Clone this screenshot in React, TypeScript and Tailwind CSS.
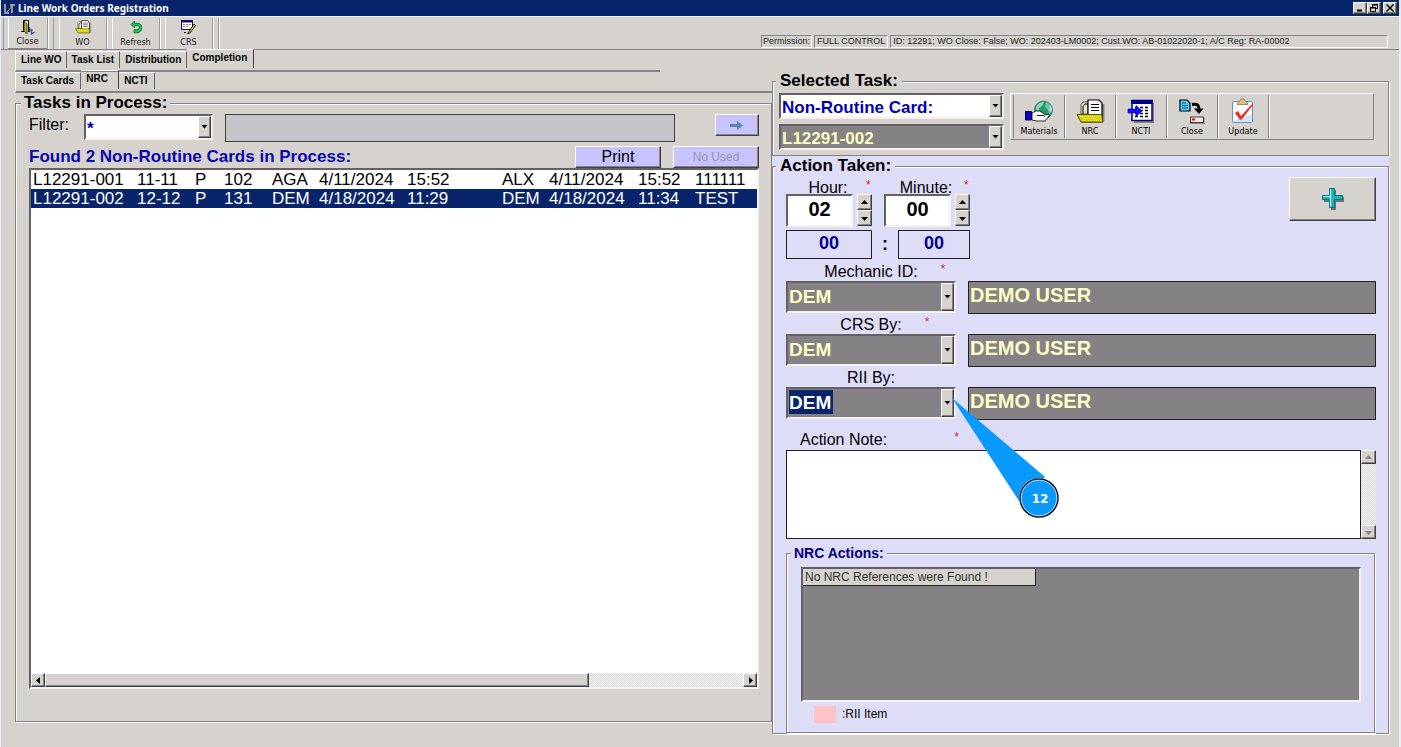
import type { ReactNode } from 'react';

const raised =
  'border border-t-white border-l-white border-r-[#424142] border-b-[#424142] shadow-[inset_-1px_-1px_0_#848284]';
const etched =
  'border border-[#848284] shadow-[1px_1px_0_#ffffff,inset_1px_1px_0_#ffffff]';
const sunken =
  'border-2 border-t-[#636163] border-l-[#636163] border-r-[#f4f2ee] border-b-[#f4f2ee]';

type ArrowDir = 'up' | 'down' | 'left' | 'right';
const arrowPoints: Record<ArrowDir, string> = {
  up: '0,5 7,5 3.5,1',
  down: '0,2 7,2 3.5,6',
  left: '5,0 5,7 1,3.5',
  right: '2,0 2,7 6,3.5',
};

function Arrow({ dir, color = '#000' }: { dir: ArrowDir; color?: string }) {
  return (
    <svg width="7" height="7" viewBox="0 0 7 7" aria-hidden="true">
      <polygon points={arrowPoints[dir]} fill={color} />
    </svg>
  );
}

function Combo({ label, id, value, className, tone }: { label?: string; id: string; value: string; className: string; tone: string }) {
  return (
    <div className={`relative ${className}`}>
      <select
        id={id}
        aria-label={label}
        defaultValue={value}
        className={`h-full w-full appearance-none rounded-none pl-[1px] font-bold outline-none ${sunken} ${tone}`}
      >
        <option>{value}</option>
      </select>
      <span className={`pointer-events-none absolute inset-y-[2px] right-[2px] flex w-[13px] items-center justify-center bg-[#d6d3ce] ${raised}`}>
        <svg width="7" height="4" viewBox="0 0 7 4" aria-hidden="true">
          <polygon points="0.5,0 6.5,0 3.5,3.5" fill="#000" />
        </svg>
      </span>
    </div>
  );
}

function DoorIcon() {
  return (
    <svg width="14" height="16" viewBox="0 0 14 16" aria-hidden="true">
      <path d="M2.500 12V1.500h5V12" fill="#fff" stroke="#000" />
      <path d="M3 2l3 3v10l-3-3z" fill="#c6b800" stroke="#000" strokeWidth=".7" />
      <path d="M0 12.500h3M7 12.500h2" stroke="#000" />
      <path d="M8.500 8v3h3M10.500 11v4l3-2" fill="none" stroke="#2a4fb0" strokeWidth="1.300" />
    </svg>
  );
}

function FolderIcon({ width, height }: { width: number; height: number }) {
  return (
    <svg width={width} height={height} viewBox="0 0 29 25" aria-hidden="true">
      <path d="M26 5h2.500v17l-2 2H5v-2h20z" fill="#848284" />
      <path d="M5 15V5l2-2h5v12z" fill="#e7e7c6" stroke="#5a5a42" />
      <path d="M7 15V7l2-2h3" fill="none" stroke="#000" />
      <path d="M12 1h11l3 3v16H12z" fill="#fff" stroke="#000" strokeWidth="1.200" />
      <path d="M15 5.500h8M15 8.500h8M15 11.500h8" stroke="#000" />
      <path d="M1 15.500h24.500L27 23H5z" fill="#d6d000" stroke="#5a5700" />
      <path d="M4 17.500h21M5 19.500h20M6 21.500h20" stroke="#fff56a" strokeDasharray="1 1" />
    </svg>
  );
}

function RefreshIcon() {
  return (
    <svg width="12" height="13" viewBox="0 0 12 13" aria-hidden="true">
      <path d="M4.500 0L1 3.500 4.500 7V4.800h3c3 0 2.500 4-1 4H4v3h4c5-1 5-9 0-9.500H4.500z" fill="#22c553" stroke="#0b6b2b" strokeWidth=".9" />
    </svg>
  );
}

function CrsIcon() {
  return (
    <svg width="15" height="15" viewBox="0 0 15 15" aria-hidden="true">
      <rect x=".5" y=".5" width="11" height="9" fill="#fff" stroke="#10106b" />
      <path d="M0 1.500h12" stroke="#10106b" strokeWidth="2" />
      <path d="M2 4.500h8M2 6.500h6" stroke="#848284" strokeDasharray="2 1" />
      <path d="M13 4l1.500 1.500-5 7-2 1 .5-2z" fill="#d6c400" stroke="#000" strokeWidth=".8" />
      <path d="M3 12.500h2M6 13.500h2" stroke="#000" />
    </svg>
  );
}

function GlobeIcon() {
  return (
    <svg width="28" height="24" viewBox="0 0 28 24" aria-hidden="true">
      <circle cx="18.500" cy="11" r="9" fill="#1f9c6b" stroke="#4a6b7b" strokeWidth=".8" />
      <path d="M11 9c1-4 4-6 8-6l-2 4-3 2v5l-2 1z" fill="#8cd6bd" />
      <path d="M21 3c4 1 6 5 6 8l-3 5-1-5-3-3z" fill="#6bc69c" />
      <path d="M25 6l2 4-1 4-2-3z" fill="#b5d6f7" />
      <path d="M7 14l4-2h4l4 3 2 1 3-1v2l-4 5h-8l-5-1z" fill="#fff" stroke="#000" strokeWidth=".8" />
      <path d="M12 16.500h6l2 1" stroke="#000" strokeWidth=".9" fill="none" />
      <path d="M.5 12.500h6v8.500h-6z" fill="#0808bd" stroke="#000063" />
    </svg>
  );
}

function TableIcon() {
  return (
    <svg width="28" height="24" viewBox="0 0 28 24" aria-hidden="true">
      <path d="M7 4h20v20H7z" fill="#848284" />
      <rect x="5" y="1.500" width="20" height="20" fill="#fff" stroke="#000084" strokeWidth="1.500" />
      <path d="M4 3h22" stroke="#000084" strokeWidth="4" />
      <path d="M8 8.500h15M8 11.500h15M8 14.500h15M8 17.500h15" stroke="#000" strokeWidth="1.400" strokeDasharray="3 2" />
      <path d="M1 10h8V6.500l6 5.500-6 5.500V14H1z" fill="#1010f7" stroke="#0000a5" strokeWidth=".6" />
    </svg>
  );
}

function TransferIcon() {
  return (
    <svg width="26" height="25" viewBox="0 0 26 25" aria-hidden="true">
      <path d="M1 1h7l3 3v8H1z" fill="#5acfff" stroke="#000" strokeWidth="1.200" />
      <path d="M3 4h4M3 6.500h6M3 9h6" stroke="#08427b" strokeWidth="1.200" />
      <path d="M13 5.500c6-1 7 1 7 5" fill="none" stroke="#000" strokeWidth="3" />
      <path d="M15 9.500h9.500L20 15z" fill="#000" />
      <rect x="11.500" y="18" width="13" height="5.500" fill="#e7e7e7" stroke="#424142" />
      <path d="M11 24.500h15v-6" stroke="#848284" fill="none" />
      <path d="M13 20.500h3" stroke="#f00" strokeWidth="2" />
    </svg>
  );
}

function ClipboardIcon() {
  return (
    <svg width="24" height="26" viewBox="0 0 24 26" aria-hidden="true">
      <rect x="1.500" y="3.500" width="20" height="21" rx="1.500" fill="#f7fbff" stroke="#6b8cc6" />
      <path d="M4 22l17-6v8H4z" fill="#d6e3f7" />
      <path d="M6 6.500c0-3 3-2 4-5.500h3c1 3.500 4 2.500 4 5.500z" fill="#d6c68c" stroke="#8c7b42" strokeWidth=".8" />
      <path d="M4 15l3-2 3 5L21 6l1 1-11 14-2 1z" fill="#e73121" />
    </svg>
  );
}

function PlusIcon() {
  return (
    <svg width="24" height="24" viewBox="0 0 24 24" aria-hidden="true">
      <path d="M10 3h5v7h8v5h-8v8h-5v-8H3v-5h7z" fill="#736f73" />
      <path d="M8.500 1.500h5v7h8v4h-8v8h-5v-8h-7v-4h7z" fill="#18b5bd" stroke="#087078" />
      <path d="M9.500 20v-10.500M2 9.500h7.500v-7" stroke="#b5ffff" strokeWidth="1.200" fill="none" />
    </svg>
  );
}

function TopTool({ label, icon, className = 'w-[48px]' }: { label: string; icon: ReactNode; className?: string }) {
  return (
    <button type="button" className={`flex h-[31px] flex-col items-center justify-end border-r border-[#9c9a9c] pb-[1px] shadow-[1px_0_0_#fff,inset_1px_0_0_#fff] ${className}`}>
      <span className="flex flex-1 items-center">{icon}</span>
      <span className="text-[9px] leading-[11px] text-[#222]">{label}</span>
    </button>
  );
}

function TaskTool({ label, icon }: { label: string; icon: ReactNode }) {
  return (
    <button type="button" className="flex h-[43px] w-[51px] flex-col items-center border-r border-[#848284] pt-[2px] shadow-[1px_0_0_#fff]">
      <span className="flex h-[28px] items-center">{icon}</span>
      <span className="text-[9px] leading-[12px]">{label}</span>
    </button>
  );
}

function Tab({ label, active = false, className = '' }: { label: string; active?: boolean; className?: string }) {
  return (
    <button
      type="button"
      role="tab"
      aria-selected={active}
      className={`border-t border-t-white border-r pl-[5px] text-left text-[10px] font-bold leading-[14px] ${
        active ? 'h-[19px] border-r-[#424142] pb-[2px]' : 'h-[17px] border-r-[#636163]'
      } ${className}`}
    >
      {label}
    </button>
  );
}

function Star() {
  return <span className="pt-[2px] text-[12px] leading-[12px] text-[#e0202c]">*</span>;
}

function FieldLabel({ htmlFor, children, required = false, className }: { htmlFor: string; children: ReactNode; required?: boolean; className: string }) {
  return (
    <div className={`grid grid-cols-[1fr_auto_1fr] ${className}`}>
      <span />
      <label htmlFor={htmlFor} className="whitespace-nowrap text-[16px] leading-[21px]">
        {children}
      </label>
      <span className="flex pl-[23px]">{required && <Star />}</span>
    </div>
  );
}

function TimeField({ id, label, value }: { id: string; label: string; value: string }) {
  return (
    <div className="w-[86px]">
      <div className="grid h-[17px] grid-cols-[80px_6px]">
        <label htmlFor={id} className="pl-[4px] text-center text-[16px] leading-[21px]">{label}</label>
        <Star />
      </div>
      <div className="flex gap-[4px]">
        <input id={id} defaultValue={value} className={`h-[33px] w-[67px] bg-white pb-[3px] text-center text-[20px] font-bold outline-none ${sunken}`} />
        <div className="flex flex-col">
          <button type="button" aria-label={`${label} up`} className={`flex h-[16px] w-[15px] items-center justify-center bg-[#d6d3ce] ${raised}`}>
            <Arrow dir="up" />
          </button>
          <button type="button" aria-label={`${label} down`} className={`flex h-[16px] w-[15px] items-center justify-center bg-[#d6d3ce] ${raised}`}>
            <Arrow dir="down" />
          </button>
        </div>
      </div>
    </div>
  );
}

function Callout() {
  return (
    <svg className="pointer-events-none absolute top-[10px] left-[165px] z-10" width="112" height="124" viewBox="0 0 112 124">
      <polygon points="1,1 68,104 94,80" fill="#0a99ff" />
      <circle cx="88" cy="101" r="20" fill="#fff" />
      <circle cx="88" cy="101" r="19" fill="#0a99ff" stroke="#111" strokeWidth="1.500" />
      <circle cx="88" cy="101" r="17.800" fill="none" stroke="#d6ecff" strokeWidth=".8" />
      <text x="89" y="106" textAnchor="middle" className="fill-white font-['DejaVu_Sans'] text-[12px] font-bold">
        12
      </text>
    </svg>
  );
}

const signers = [
  { id: 'mechanic', label: 'Mechanic ID:', required: true, selected: false },
  { id: 'crs', label: 'CRS By:', required: true, selected: false },
  { id: 'rii', label: 'RII By:', required: false, selected: true },
];

const rows = [
  ['L12291-001', '11-11', 'P', '102', 'AGA', '4/11/2024', '15:52', 'ALX', '4/11/2024', '15:52', '111111'],
  ['L12291-002', '12-12', 'P', '131', 'DEM', '4/18/2024', '11:29', 'DEM', '4/18/2024', '11:34', 'TEST'],
];
const columnWidths = ['w-[106px]', 'w-[58px]', 'w-[29px]', 'w-[48px]', 'w-[47px]', 'w-[88px]', 'w-[95px]', 'w-[47px]', 'w-[89px]', 'w-[57px]', 'w-auto'];

const hatch = 'bg-[repeating-conic-gradient(#ffffff_0_25%,#d6d3ce_0_50%)] bg-size-[2px_2px]';

export default function App() {
  return (
    <div className="flex min-h-screen flex-col border-r-2 border-l border-[#e7ebf7] bg-[#d6d3ce] font-['Liberation_Sans',Arial,sans-serif] text-black">
      <header className="flex h-[16px] items-center justify-between bg-[#08246b] pl-[2px] pr-[2px]">
        <div className="flex items-center gap-[2px]">
          <svg width="13" height="13" viewBox="0 0 13 13" aria-hidden="true">
            <path d="M2 2v9h4M7 3h5M9 3v8" stroke="#b5bdd6" strokeWidth="1.500" fill="none" />
            <path d="M4 10l6-7" stroke="#d6a542" />
          </svg>
          <h1 className="font-['Noto_Sans'] text-[10px] font-bold leading-[14px] text-white">Line Work Orders Registration</h1>
        </div>
        <div className="flex">
          <button type="button" aria-label="Minimize" className={`flex h-[12px] w-[14px] items-center justify-center bg-[#d6d3ce] ${raised}`}>
            <svg width="8" height="8" viewBox="0 0 8 8"><path d="M1 6.500h5" stroke="#000" strokeWidth="2" /></svg>
          </button>
          <button type="button" aria-label="Restore" className={`flex h-[12px] w-[14px] items-center justify-center bg-[#d6d3ce] ${raised}`}>
            <svg width="8" height="8" viewBox="0 0 8 8"><path d="M2.500 3V.5h5v4H6M.5 3.500h5v4h-5zM2 1h6M0 4h6" fill="none" stroke="#000" /></svg>
          </button>
          <button type="button" aria-label="Close window" className={`ml-[2px] flex h-[12px] w-[14px] items-center justify-center bg-[#d6d3ce] ${raised}`}>
            <svg width="8" height="8" viewBox="0 0 8 8"><path d="M.5 .5l7 7M7.500 .5l-7 7" stroke="#000" strokeWidth="1.500" /></svg>
          </button>
        </div>
      </header>

      <div className="flex h-[34px] items-center justify-between border-b border-[#848284] border-t border-t-[#f4f2ee] pr-[11px]">
        <nav className="ml-[2px] flex h-[31px] gap-[5px] border-l border-[#9c9a9c] pl-[4px] font-['DejaVu_Sans_Condensed']">
          <TopTool label="Close" icon={<DoorIcon />} className="w-[40px] border-b border-b-[#848284]" />
          <span className="w-px bg-[#9c9a9c]" />
          <TopTool label="WO" icon={<FolderIcon width={16} height={14} />} />
          <TopTool label="Refresh" icon={<RefreshIcon />} />
          <TopTool label="CRS" icon={<CrsIcon />} />
          <span className="w-px bg-[#9c9a9c] shadow-[1px_0_0_#fff]" />
        </nav>
        <div className="flex w-[627px] gap-[2px] self-end pb-[1px] text-[9px] leading-[11px] text-[#222]">
          <span className="border border-[#848284] border-r-white border-b-white px-[1px]">Permission:</span>
          <span className="border border-[#848284] border-r-white border-b-white px-[2px]">FULL CONTROL</span>
          <span className="flex-1 whitespace-nowrap border border-[#848284] border-r-white border-b-white px-[2px]">
            ID: 12291; WO Close: False; WO: 202403-LM0002; Cust.WO: AB-01022020-1; A/C Reg: RA-00002
          </span>
        </div>
      </div>

      <main className="grid flex-1 grid-cols-[771fr_627fr]">
        <section className="flex flex-col pb-[25px] pl-[14px]">
          <div role="tablist" className="mr-[112px] flex h-[22px] items-end border-b-2 border-[#848284] border-l border-l-white pb-[2px]">
            <Tab label="Line WO" className="pr-[4px]" />
            <Tab label="Task List" className="pr-[5px]" />
            <Tab label="Distribution" className="pr-[5px]" />
            <Tab label="Completion" active className="pr-[6px]" />
          </div>
          <div role="tablist" className="flex h-[21px] items-end border-b-2 border-[#848284] border-l border-l-white pb-[2px]">
            <Tab label="Task Cards" className="pr-[6px]" />
            <Tab label="NRC" active className="w-[38px]" />
            <Tab label="NCTI" className="w-[36px]" />
          </div>

          <fieldset className={`flex min-w-0 flex-1 flex-col pr-[12px] pl-[13px] ${etched}`}>
            <legend className="-ml-[8px] bg-[#d6d3ce] px-[3px] text-[17px] font-bold leading-[20px]">Tasks in Process:</legend>
            <div className="flex h-[33px] items-start pt-[1px]">
              <label htmlFor="filter" className="w-[55px] pt-[1px] text-[16px] leading-[20px]">Filter:</label>
              <Combo id="filter" value="*" className="h-[26px] w-[129px]" tone="bg-white pb-[3px] text-[#0000a5] text-[17px]" />
              <output className="ml-[12px] h-[28px] flex-1 border border-[#424142] bg-[#c6c3c6]" />
              <button type="button" aria-label="Apply filter" className={`ml-[40px] flex h-[22px] w-[44px] items-center justify-center bg-[#c6c3ff] ${raised}`}>
                <svg width="14" height="9" viewBox="0 0 14 9"><path d="M0 3h7V0l6 4.500L7 9V6H0z" fill="#5a86ad" /></svg>
              </button>
            </div>
            <div className="flex items-end">
              <h2 className="flex-1 text-[17px] font-bold leading-[22px] text-[#0808ad]">Found 2 Non-Routine Cards in Process:</h2>
              <button type="button" className={`mr-[12px] h-[22px] w-[86px] bg-[#c6c3ff] text-[16px] leading-[20px] ${raised}`}>Print</button>
              <button type="button" disabled className={`h-[22px] w-[86px] bg-[#c6c3ff] text-[12px] leading-[20px] text-[#9694ad] ${raised}`}>No Used</button>
            </div>
            <div className={`mb-[32px] flex flex-1 flex-col bg-white ${sunken}`}>
              <div className="flex-1 overflow-hidden">
                <table className="w-full table-fixed text-[17px] leading-[19px]">
                  <tbody>
                    {rows.map((row, r) => (
                      <tr key={row[0]} className={r === 1 ? 'bg-[#08246b] text-white' : ''}>
                        {row.map((cell, c) => (
                          <td key={c} className={`whitespace-nowrap p-0 ${c === 0 ? 'pl-[2px]' : ''} ${columnWidths[c]}`}>{cell}</td>
                        ))}
                      </tr>
                    ))}
                  </tbody>
                </table>
              </div>
              <div className={`flex h-[14px] ${hatch}`}>
                <button type="button" aria-label="Scroll left" className={`flex w-[14px] items-center justify-center bg-[#d6d3ce] ${raised}`}>
                  <Arrow dir="left" />
                </button>
                <span className="flex flex-1">
                  <span className={`w-[78%] bg-[#d6d3ce] ${raised}`} />
                </span>
                <button type="button" aria-label="Scroll right" className={`flex w-[14px] items-center justify-center bg-[#d6d3ce] ${raised}`}>
                  <Arrow dir="right" />
                </button>
              </div>
            </div>
          </fieldset>
        </section>

        <section className="flex flex-col pt-[21px] pr-[10px] pb-[13px]">
          <fieldset className={`flex min-w-0 items-start gap-[6px] pt-[2px] pr-[14px] pb-[5px] pl-[6px] ${etched}`}>
            <legend className="-ml-[3px] bg-[#d6d3ce] px-[4px] text-[17px] font-bold leading-[20px]">Selected Task:</legend>
            <div className="flex flex-col gap-[5px]">
              <Combo id="kind" label="Task kind" value="Non-Routine Card:" className="h-[26px] w-[225px]" tone="bg-white pb-[3px] text-[#0000b5] text-[17px]" />
              <Combo id="task" label="Task number" value="L12291-002" className="h-[26px] w-[225px]" tone="bg-[#848284] pb-[3px] text-[#ffffc6] text-[17px]" />
            </div>
            <div className="flex h-[47px] flex-1 items-center border border-t-white border-l-white border-[#848284] pl-[2px]">
              <span className="h-[43px] w-px bg-[#848284]" />
              <div className="flex font-['DejaVu_Sans_Condensed']">
                <TaskTool label="Materials" icon={<GlobeIcon />} />
                <TaskTool label="NRC" icon={<FolderIcon width={29} height={25} />} />
                <TaskTool label="NCTI" icon={<TableIcon />} />
                <TaskTool label="Close" icon={<TransferIcon />} />
                <TaskTool label="Update" icon={<ClipboardIcon />} />
              </div>
            </div>
          </fieldset>

          <div className="flex flex-1 flex-col bg-[#deddf7]">
            <fieldset className={`flex min-w-0 flex-1 flex-col pl-[13px] ${etched}`}>
              <legend className="-ml-[10px] bg-[#deddf7] px-[4px] text-[17px] font-bold leading-[20px]">Action Taken:</legend>
              <div className="flex items-start justify-between pt-[1px] pr-[12px]">
                <div>
                  <div className="flex gap-[12px]">
                    <TimeField id="hour" label="Hour:" value="02" />
                    <TimeField id="minute" label="Minute:" value="00" />
                  </div>
                  <div className="mt-[3px] flex items-center text-[18px] font-bold leading-[27px]">
                    <output className="h-[29px] w-[86px] border border-[#212021] text-center leading-[24px] text-[#00008c]">00</output>
                    <span className="w-[26px] text-center">:</span>
                    <output className="h-[29px] w-[72px] border border-[#212021] text-center leading-[24px] text-[#00008c]">00</output>
                  </div>
                </div>
                <button type="button" aria-label="Add action" className={`flex h-[44px] w-[87px] items-center justify-center bg-[#d6d3ce] ${raised}`}>
                  <PlusIcon />
                </button>
              </div>

              <div className="flex flex-col pt-[2px] pr-[12px]">
                {signers.map((s) => (
                  <div key={s.id}>
                    <FieldLabel htmlFor={s.id} required={s.required} className="h-[20px] w-[170px]">
                      {s.label}
                    </FieldLabel>
                    <div className="relative flex gap-[12px]">
                      <Combo
                        id={s.id}
                        value="DEM"
                        className="h-[32px] w-[170px]"
                        tone={
                          s.selected
                            ? 'bg-[#848284] bg-[linear-gradient(#08246b,#08246b)] bg-size-[44px_24px] bg-position-[1px_1px] bg-no-repeat pb-[2px] text-white text-[19px]'
                            : 'bg-[#848284] pb-[2px] text-[#ffffc6] text-[19px]'
                        }
                      />
                      <output className="h-[33px] flex-1 border border-[#212021] bg-[#848284] pl-[1px] text-[20px] font-bold leading-[27px] text-[#ffffc6]">DEMO USER</output>
                      {s.selected && <Callout />}
                    </div>
                  </div>
                ))}
              </div>

              <div className="flex gap-[67px] pt-[9px] pl-[14px]">
                <label htmlFor="note" className="text-[16px] leading-[21px]">Action Note:</label>
                <Star />
              </div>
              <div className="mr-[12px] flex h-[89px]">
                <textarea id="note" className="flex-1 resize-none border border-[#212021] bg-white outline-none" />
                <div className={`flex w-[15px] flex-col justify-between ${hatch}`}>
                  <button type="button" aria-label="Scroll note up" className={`flex h-[14px] items-center justify-center bg-[#d6d3ce] ${raised}`}>
                    <Arrow dir="up" color="#848284" />
                  </button>
                  <button type="button" aria-label="Scroll note down" className={`flex h-[14px] items-center justify-center bg-[#d6d3ce] ${raised}`}>
                    <Arrow dir="down" color="#848284" />
                  </button>
                </div>
              </div>

              <fieldset className={`mt-[4px] mr-[13px] flex min-w-0 flex-1 flex-col pt-[4px] pr-[13px] pl-[14px] ${etched}`}>
                <legend className="-ml-[10px] bg-[#deddf7] px-[3px] text-[14px] font-bold leading-[20px] text-[#00007b]">NRC Actions:</legend>
                <div className={`flex flex-1 items-start bg-[#848284] ${sunken}`}>
                  <p className="h-[17px] w-[233px] border-r border-b border-[#212021] bg-[#d6d3ce] pl-[2px] text-[12px] leading-[16px] text-[#313031]">No NRC References were Found !</p>
                </div>
                <div className="flex h-[30px] items-start gap-[6px] pt-[4px] pl-[13px]">
                  <span className="h-[17px] w-[22px] bg-[#ffc3c6]" />
                  <span className="text-[12px] leading-[16px]">:RII Item</span>
                </div>
              </fieldset>
            </fieldset>
          </div>
        </section>
      </main>
    </div>
  );
}
